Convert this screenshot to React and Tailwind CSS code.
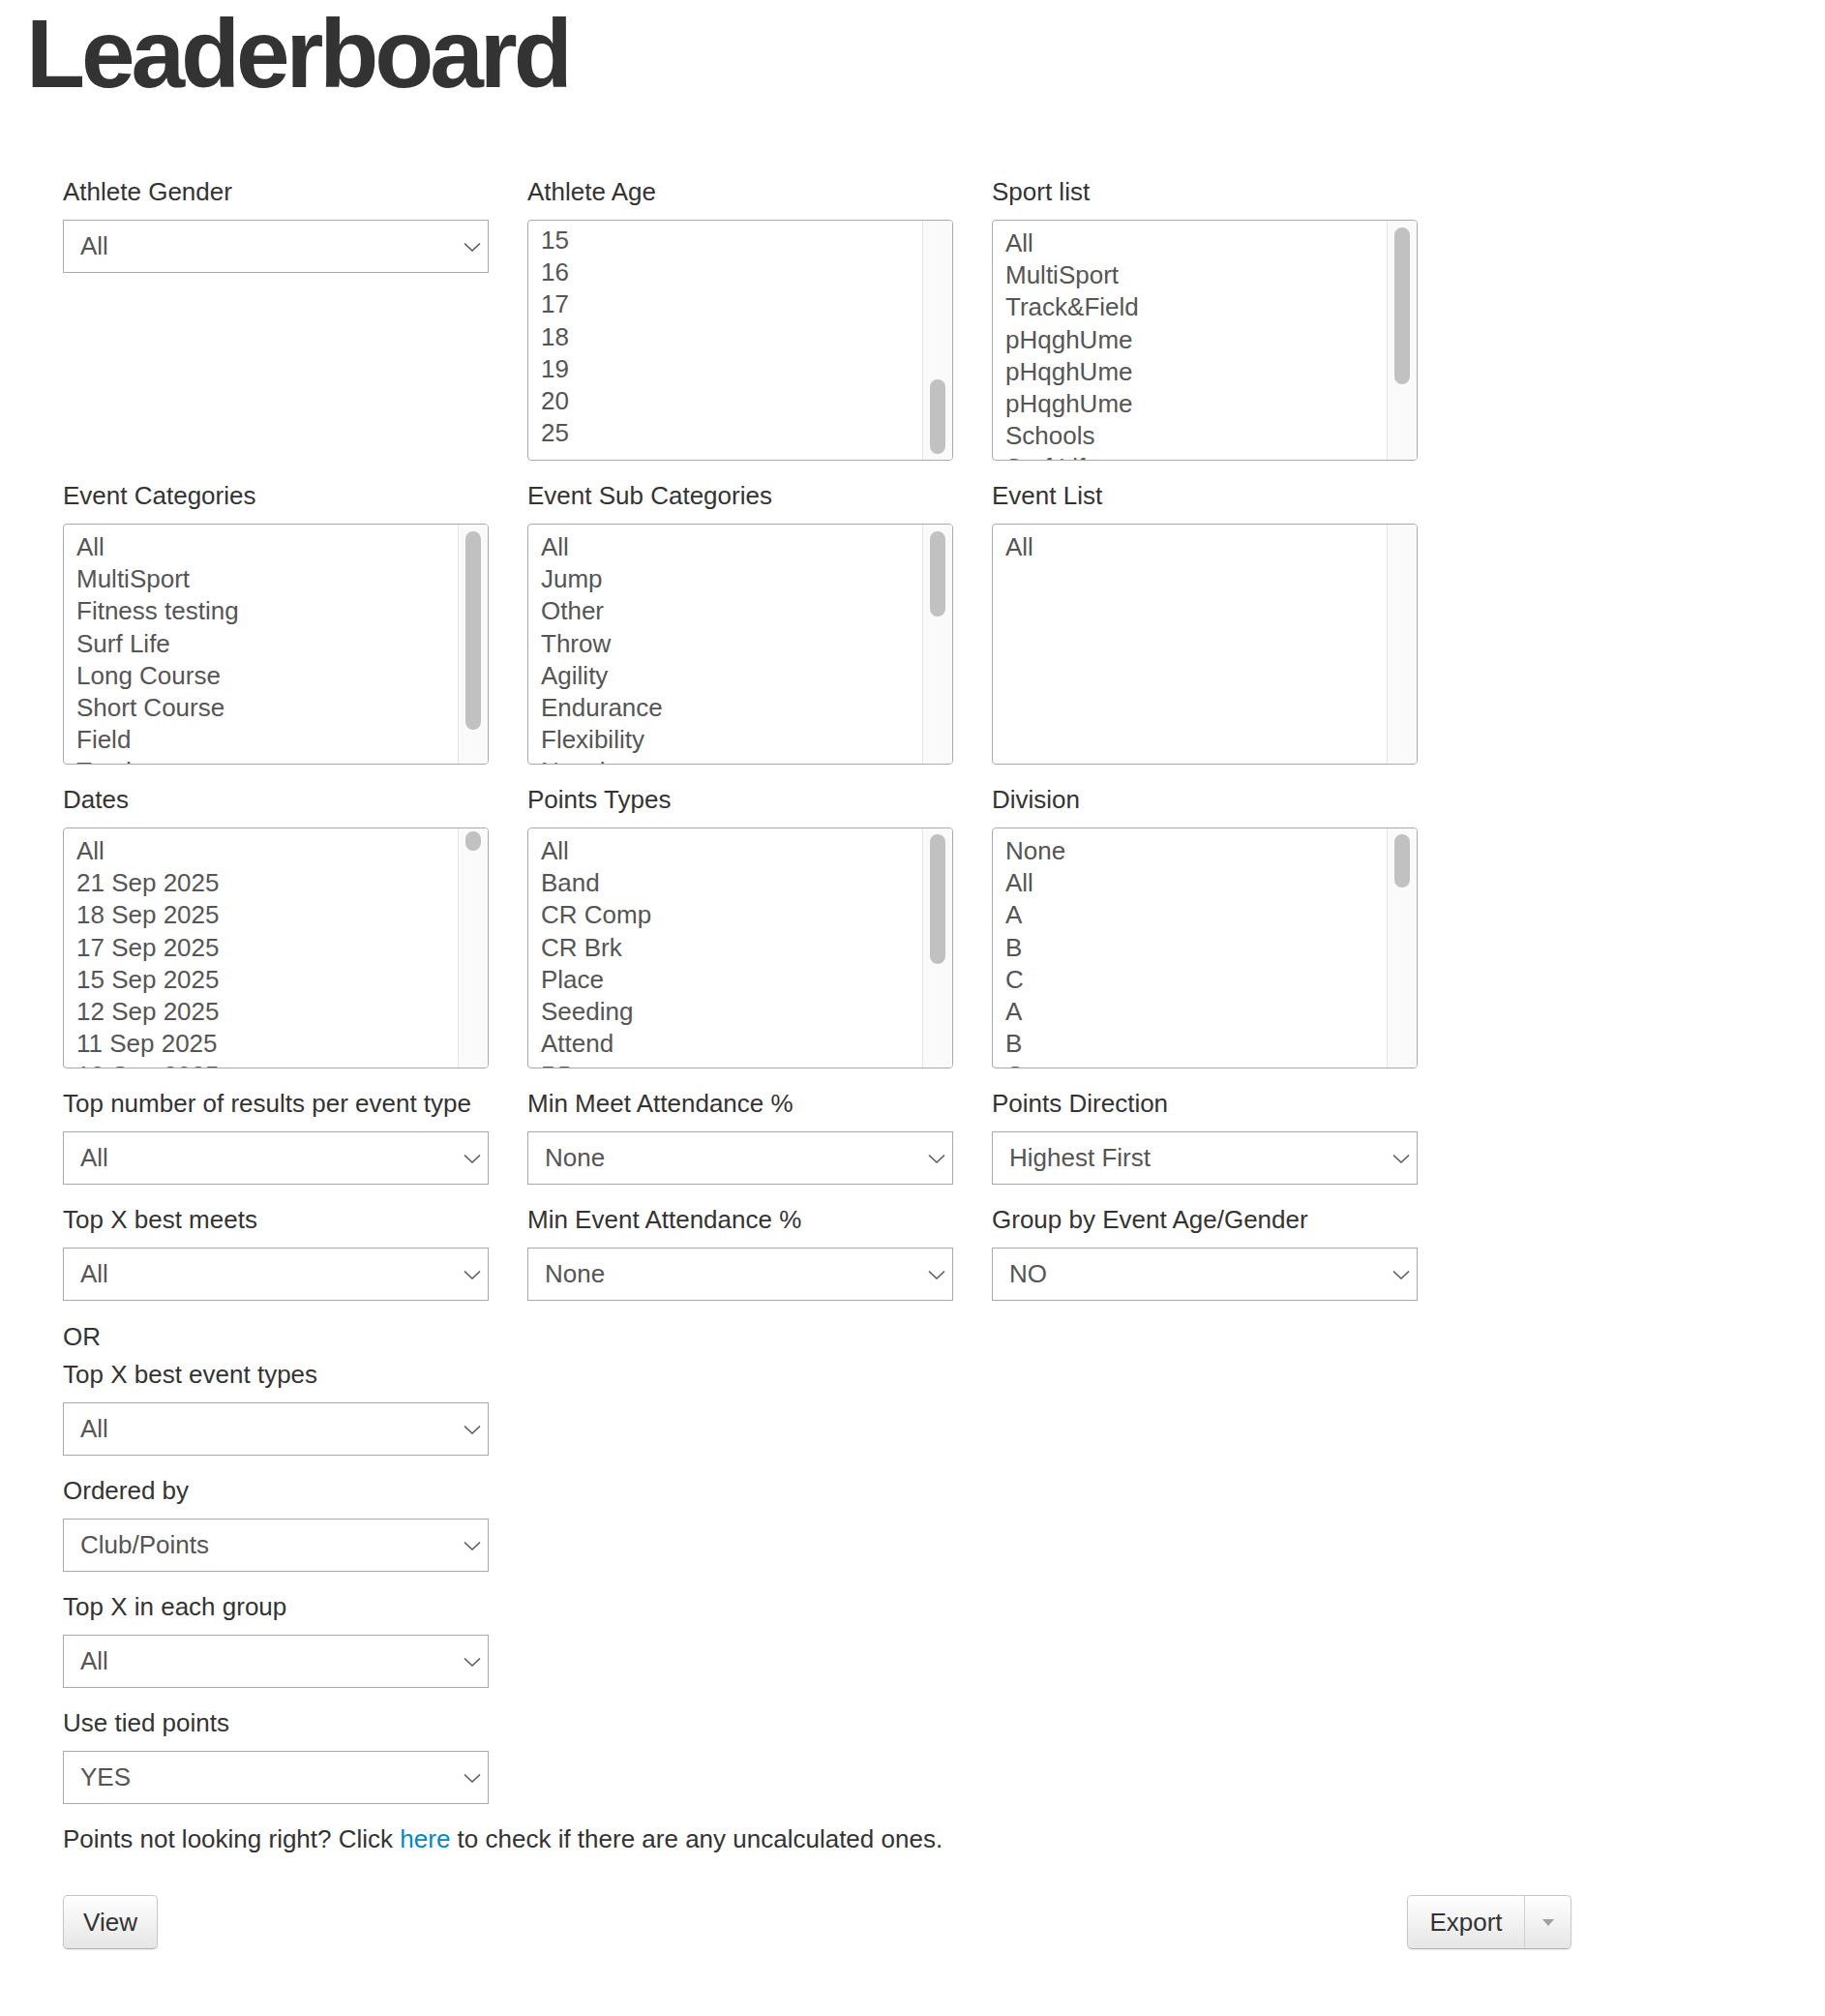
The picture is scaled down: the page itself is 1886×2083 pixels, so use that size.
import React from "react";

// thumb values are measured from the top of the list box
const ageList = {
  items: ["15", "16", "17", "18", "19", "20", "25"],
  offset: 4,
  thumb: { top: 165, height: 77 },
};

const rows = [
  [
    { label: "Athlete Gender", select: "All" },
    { label: "Athlete Age", list: ageList },
    {
      label: "Sport list",
      list: {
        items: ["All", "MultiSport", "Track&Field", "pHqghUme", "pHqghUme", "pHqghUme", "Schools", "Surf Life"],
        thumb: { top: 8, height: 162 },
      },
    },
  ],
  [
    {
      label: "Event Categories",
      list: {
        items: ["All", "MultiSport", "Fitness testing", "Surf Life", "Long Course", "Short Course", "Field", "Track"],
        thumb: { top: 8, height: 205 },
      },
    },
    {
      label: "Event Sub Categories",
      list: {
        items: ["All", "Jump", "Other", "Throw", "Agility", "Endurance", "Flexibility", "Novelty"],
        thumb: { top: 8, height: 88 },
      },
    },
    { label: "Event List", list: { items: ["All"], thumb: null } },
  ],
  [
    {
      label: "Dates",
      list: {
        items: ["All", "21 Sep 2025", "18 Sep 2025", "17 Sep 2025", "15 Sep 2025", "12 Sep 2025", "11 Sep 2025", "10 Sep 2025"],
        thumb: { top: 4, height: 20 },
      },
    },
    {
      label: "Points Types",
      list: {
        items: ["All", "Band", "CR Comp", "CR Brk", "Place", "Seeding", "Attend", "PB"],
        thumb: { top: 7, height: 134 },
      },
    },
    {
      label: "Division",
      list: {
        items: ["None", "All", "A", "B", "C", "A", "B", "C"],
        thumb: { top: 7, height: 55 },
      },
    },
  ],
  [
    { label: "Top number of results per event type", select: "All" },
    { label: "Min Meet Attendance %", select: "None" },
    { label: "Points Direction", select: "Highest First" },
  ],
  [
    { label: "Top X best meets", select: "All" },
    { label: "Min Event Attendance %", select: "None" },
    { label: "Group by Event Age/Gender", select: "NO" },
  ],
];

const leftFields = [
  { label: "Top X best event types", select: "All" },
  { label: "Ordered by", select: "Club/Points" },
  { label: "Top X in each group", select: "All" },
  { label: "Use tied points", select: "YES" },
];

function Chevron() {
  return (
    <svg width="18" height="10" viewBox="0 0 18 10" fill="none">
      <polyline points="1,1.5 9,9 17,1.5" stroke="#555" strokeWidth="1.5" />
    </svg>
  );
}

function SelectBox({ value }) {
  return (
    <div className="flex h-[55px] items-center justify-between border border-[#aaa] bg-white pl-[17px] pr-[7px] text-[26px] text-[#555]">
      <span>{value}</span>
      <Chevron />
    </div>
  );
}

function ListBox({ items, thumb, offset = 7 }) {
  return (
    <div className="relative h-[249px] overflow-hidden rounded-[4px] border border-[#aaa] bg-white">
      <div
        className="pl-[13px] pr-[40px] text-[26px] leading-[33.2px] text-[#555]"
        style={{ paddingTop: offset }}
      >
        {items.map((item, i) => (
          <div key={i} className="whitespace-nowrap">
            {item}
          </div>
        ))}
      </div>
      <div className="absolute top-0 right-0 bottom-0 w-[31px] border-l border-[#e6e6e6] bg-[#fafafa]">
        {thumb && (
          <div
            className="absolute left-[7px] w-[16px] rounded-full bg-[#c1c1c1]"
            style={{ top: thumb.top - 1, height: thumb.height }}
          />
        )}
      </div>
    </div>
  );
}

function Field({ field }) {
  return (
    <div className="mb-[19px]">
      <div className="mb-3 text-[26px] leading-[34px] text-[#333]">{field.label}</div>
      {field.select ? <SelectBox value={field.select} /> : <ListBox {...field.list} />}
    </div>
  );
}

function GradButton({ children, className = "" }) {
  return (
    <div
      className={
        "flex h-[56px] items-center rounded-[5px] border border-[#c8c8c8] border-b-[#b0b0b0] bg-gradient-to-b from-white to-[#e6e6e6] text-[26px] text-[#333] shadow-[0_1px_2px_rgba(0,0,0,0.08)] " +
        className
      }
    >
      {children}
    </div>
  );
}

export default function App() {
  return (
    <div className="min-h-[2083px] bg-white pb-[68px] font-['Liberation_Sans',Arial,sans-serif] text-[#333]">
      <h1 className="ml-[27px] text-[100px] leading-[110px] font-bold tracking-[-4.1px] text-[#333]">
        Leaderboard
      </h1>

      <div className="mt-[71px] pl-[65px]">
        <div className="grid grid-cols-[440px_440px_440px] gap-x-[40px]">
          {rows.map((row, r) =>
            row.map((field, c) => <Field key={r + "-" + c} field={field} />)
          )}
        </div>

        <div className="w-[440px]">
          <div className="mt-[1px] mb-[5px] text-[26px] leading-[34px] text-[#333]">OR</div>
          {leftFields.map((field) => (
            <Field key={field.label} field={field} />
          ))}
        </div>

        <p className="mt-[1px] text-[26px] leading-[34px] text-[#333]">
          Points not looking right? Click{" "}
          <a href="#" className="text-[#0088cc]">
            here
          </a>{" "}
          to check if there are any uncalculated ones.
        </p>

        <div className="mt-[41px] flex w-[1559px] items-start justify-between">
          <GradButton className="w-[98px] justify-center">View</GradButton>
          <GradButton className="w-[170px]">
            <span className="flex w-[120px] justify-center">Export</span>
            <span className="flex h-full flex-1 items-center justify-center border-l border-[#d0d0d0]">
              <span className="h-0 w-0 border-x-[6px] border-t-[7px] border-x-transparent border-t-[#a0a0a0]" />
            </span>
          </GradButton>
        </div>
      </div>
    </div>
  );
}
